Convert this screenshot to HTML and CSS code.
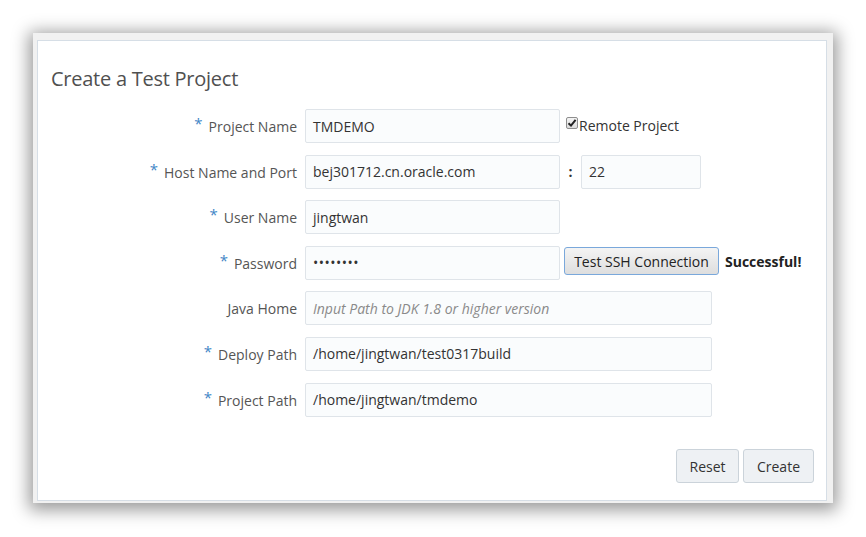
FILE: index.html
```html
<!DOCTYPE html>
<html>
<head>
<meta charset="utf-8">
<link rel="stylesheet" href="styles.css">
</head>
<body>
<div class="frame">
  <div class="panel">
    <h1 class="title">Create a Test Project</h1>
    <div class="form">
      <div class="row">
        <label class="label"><span class="req">*</span>Project Name</label>
        <div class="input">TMDEMO</div>
        <span class="check"><svg width="10" height="10" viewBox="0 0 10 10"><path d="M1.5 5.2 L4 7.6 L8.6 1.8" fill="none" stroke="#222" stroke-width="2"/></svg></span>
        <span class="checktext">Remote Project</span>
      </div>
      <div class="row">
        <label class="label"><span class="req">*</span>Host Name and Port</label>
        <div class="input">bej301712.cn.oracle.com</div>
        <span class="colon">:</span>
        <div class="input port">22</div>
      </div>
      <div class="row">
        <label class="label"><span class="req">*</span>User Name</label>
        <div class="input">jingtwan</div>
      </div>
      <div class="row">
        <label class="label"><span class="req">*</span>Password</label>
        <div class="input pwd">••••••••</div>
        <button class="sshbtn">Test SSH Connection</button>
        <span class="success">Successful!</span>
      </div>
      <div class="row">
        <label class="label">Java Home</label>
        <div class="input wide placeholder">Input Path to JDK 1.8 or higher version</div>
      </div>
      <div class="row">
        <label class="label"><span class="req">*</span>Deploy Path</label>
        <div class="input wide">/home/jingtwan/test0317build</div>
      </div>
      <div class="row">
        <label class="label"><span class="req">*</span>Project Path</label>
        <div class="input wide">/home/jingtwan/tmdemo</div>
      </div>
    </div>
    <div class="actions">
      <button class="btn reset">Reset</button>
      <button class="btn create">Create</button>
    </div>
  </div>
</div>
</body>
</html>
```
FILE: styles.css
```css
html {
  margin: 0;
  padding: 0;
  background: #ffffff;
  min-height: 100%;
}
body {
  margin: 0;
  min-height: 537px;
  box-sizing: border-box;
  font-family: "Open Sans", "Noto Sans", sans-serif;
  font-size: 14px;
  color: #333;
  padding: 33px 0 0 33px;
}
.frame {
  position: relative;
  width: 790px;
  height: 461px;
  padding: 7px 6px 2px 4px;
  background: #f1f1f1;
  box-shadow: 0 3px 16px 4px rgba(0, 0, 0, 0.4);
}
.panel {
  box-sizing: border-box;
  height: 100%;
  background: #fff;
  border: 1px solid #d6dee6;
  padding: 0 12px 0 13px;
  display: flex;
  flex-direction: column;
}
.title {
  margin: 24px 0 0 0;
  font-size: 20px;
  font-weight: normal;
  line-height: 28px;
  color: #505050;
  letter-spacing: -0.25px;
}
.form {
  margin-top: 16px;
  display: flex;
  flex-direction: column;
  gap: 11.6px;
}
.row {
  display: flex;
  align-items: center;
  height: 34px;
}
.label {
  width: 246px;
  flex: none;
  text-align: right;
  color: #555;
  margin-right: 8px;
  white-space: nowrap;
}
.req {
  color: #3f86c6;
  font-size: 15px;
  position: relative;
  top: -3px;
  margin-right: 6px;
}
.input {
  box-sizing: border-box;
  width: 255px;
  height: 34px;
  border: 1px solid #dfe4e9;
  border-radius: 2px;
  background: #fafcfd;
  padding: 0 7px;
  display: flex;
  align-items: center;
  color: #333;
  white-space: nowrap;
}
.input.wide {
  width: 407px;
}
.input.port {
  width: 120px;
}
.input.pwd {
  letter-spacing: 0.5px;
}
.placeholder {
  font-style: italic;
  color: #8a8a8a;
}
.colon {
  width: 21px;
  text-align: center;
  font-weight: bold;
  color: #333;
}
.check {
  box-sizing: border-box;
  width: 12px;
  height: 12px;
  margin-left: 6px;
  margin-top: -6px;
  border: 1px solid #8e8e8e;
  border-radius: 2px;
  background: linear-gradient(#f4f4f4, #dcdcdc);
  display: flex;
  align-items: center;
  justify-content: center;
}
.checktext {
  color: #333;
  margin-left: 1px;
  margin-top: -1px;
}
.sshbtn {
  box-sizing: border-box;
  height: 28px;
  width: 155px;
  margin-left: 4px;
  margin-top: -3px;
  padding: 0;
  font-family: inherit;
  font-size: 14px;
  color: #222;
  border: 1px solid #7aa8db;
  border-radius: 3px;
  background: linear-gradient(#f4f4f4, #dedede);
}
.success {
  font-weight: bold;
  color: #222;
  margin-left: 6px;
  margin-top: -3px;
}
.actions {
  margin-top: auto;
  margin-bottom: 17px;
  display: flex;
  justify-content: flex-end;
  gap: 4px;
}
.btn {
  box-sizing: border-box;
  height: 34px;
  padding: 0;
  font-family: inherit;
  font-size: 14px;
  color: #333;
  border: 1px solid #cbd3da;
  border-radius: 3px;
  background: #eef1f4;
}
.btn.reset {
  width: 63px;
}
.btn.create {
  width: 71px;
}
```
